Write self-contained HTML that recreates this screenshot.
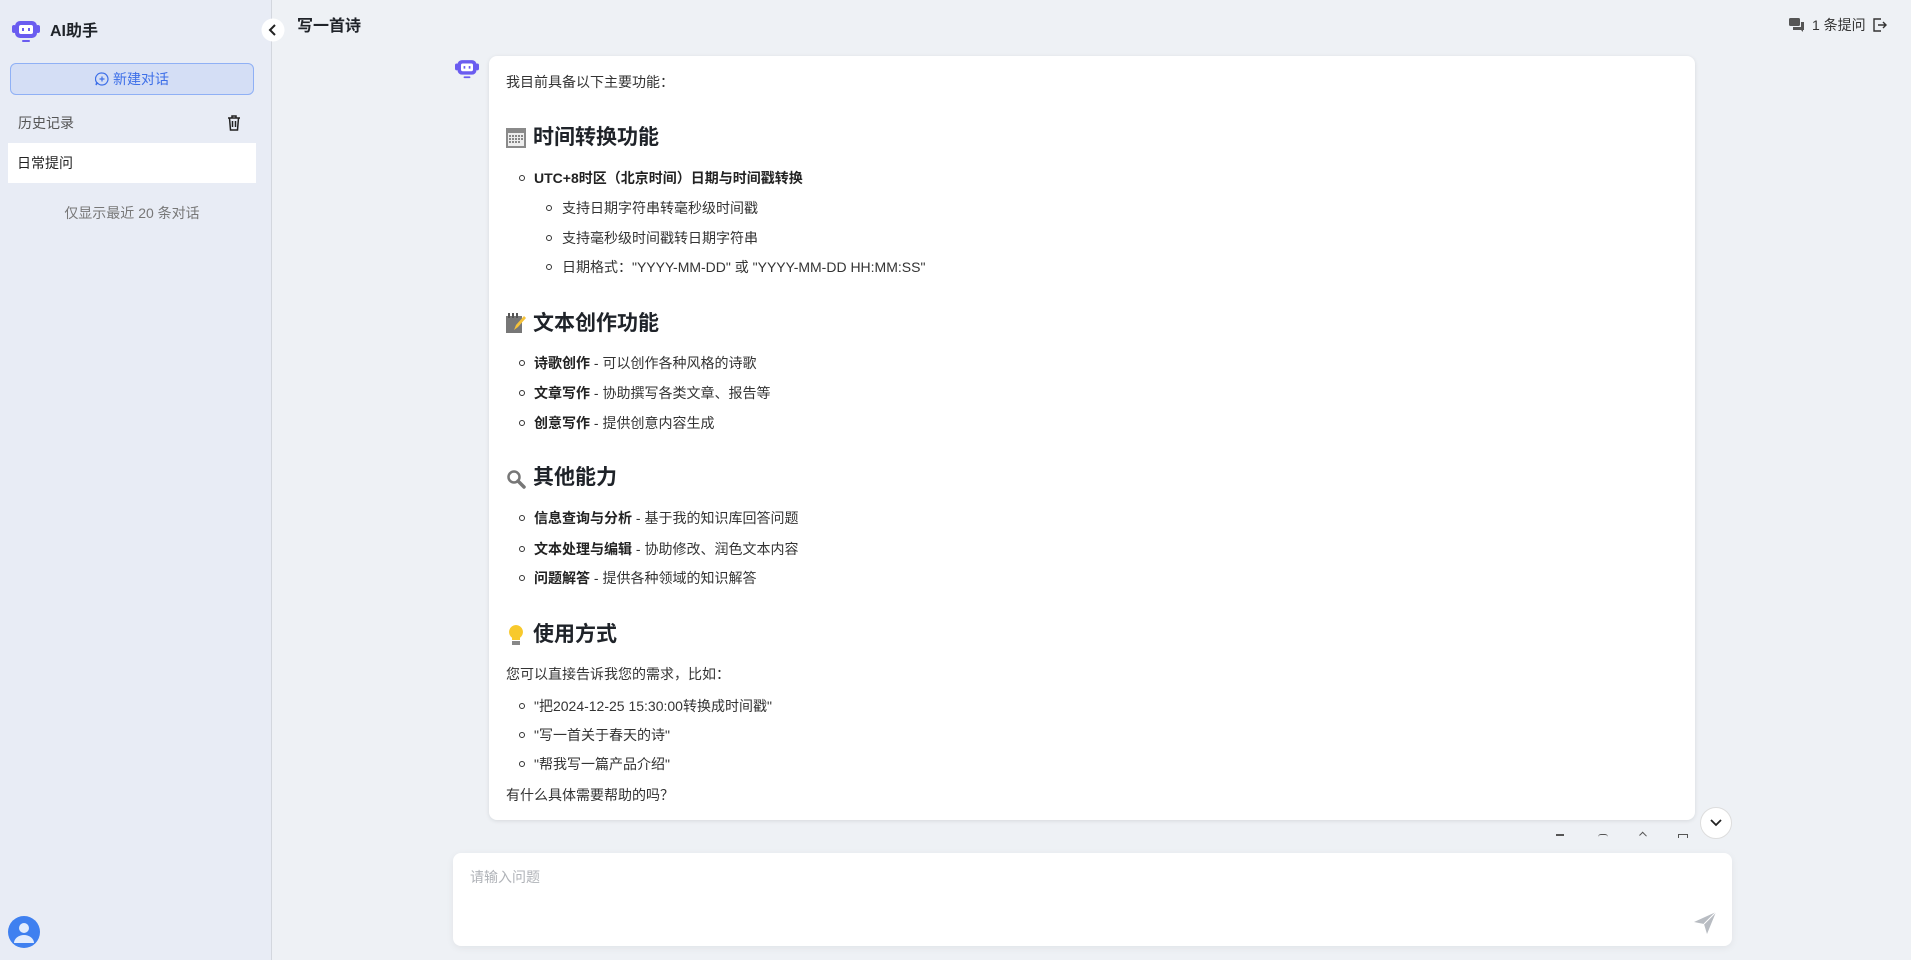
<!DOCTYPE html>
<html><head><meta charset="utf-8"><style>
*{margin:0;padding:0;box-sizing:border-box}
body{width:1911px;height:960px;overflow:hidden;background:#eef1f5;font-family:"Liberation Sans","Noto Sans CJK SC",sans-serif;color:#1f2329;position:relative}
.a{position:absolute;white-space:nowrap}
#side{position:absolute;left:0;top:0;width:272px;height:960px;background:#e8ecf5;border-right:1px solid #d3d7de}
.t{font-size:14px;line-height:20px;color:#333}
.h{font-size:21px;font-weight:bold;line-height:28px;color:#1f2329}
.b1{position:absolute;width:6px;height:6px;border:1.3px solid #333;border-radius:50%}
b{font-weight:bold;color:#222}
</style></head><body>
<div id="side">
 <svg class="a" style="left:12px;top:20px" width="28" height="24" viewBox="0 0 28 24"><rect x="0" y="5" width="4" height="8" rx="2" fill="#6a5cf0"/><rect x="24" y="5" width="4" height="8" rx="2" fill="#6a5cf0"/><rect x="3" y="1" width="22" height="17" rx="5" fill="#6a5cf0"/><rect x="7" y="5" width="14" height="9" rx="2" fill="#fff"/><rect x="10" y="8" width="2" height="3" fill="#6a5cf0"/><rect x="16" y="8" width="2" height="3" fill="#6a5cf0"/><rect x="10" y="20" width="8" height="2" rx="1" fill="#6a5cf0"/></svg>
 <div class="a" style="left:50px;top:20px;font-size:16px;font-weight:bold;line-height:24px">AI助手</div>
 <div class="a" style="left:10px;top:63px;width:244px;height:32px;border:1px solid #8fb0f5;border-radius:6px;background:#d4def5;color:#3d6fe8;font-size:14px;line-height:30px;text-align:center">
  <svg style="vertical-align:-2px;margin-right:4px" width="14" height="14" viewBox="0 0 14 14"><path d="M7 1a6 6 0 1 1-4.5 10L1 13l.6-2.6A6 6 0 0 1 7 1z" fill="none" stroke="#3d6fe8" stroke-width="1.2"/><path d="M7 4.5v5M4.5 7h5" stroke="#3d6fe8" stroke-width="1.2"/></svg>新建对话</div>
 <div class="a" style="left:18px;top:113px;font-size:14px;color:#555;line-height:20px">历史记录</div>
 <svg class="a" style="left:227px;top:115px" width="14" height="16" viewBox="0 0 14 16"><path d="M1 3h12M5 3V1h4v2M2.5 3l1 12h7l1-12M5.5 6v6M8.5 6v6" fill="none" stroke="#222" stroke-width="1.5"/></svg>
 <div class="a" style="left:8px;top:143px;width:248px;height:40px;background:#fff;font-size:14px;line-height:40px;padding-left:9px;color:#222">日常提问</div>
 <div class="a" style="left:0;top:203px;width:264px;text-align:center;font-size:14px;color:#777;line-height:20px">仅显示最近 20 条对话</div>
 <svg class="a" style="left:8px;top:916px" width="32" height="32" viewBox="0 0 32 32"><circle cx="16" cy="16" r="16" fill="#3f80f0"/><circle cx="16" cy="12" r="5" fill="#fff" opacity=".85"/><path d="M6 27a10 8 0 0 1 20 0z" fill="#fff" opacity=".85"/></svg>
</div>
<svg class="a" style="left:261px;top:18px" width="24" height="24" viewBox="0 0 24 24"><circle cx="12" cy="12" r="11.5" fill="#fff"/><path d="M14 7l-5 5 5 5" fill="none" stroke="#222" stroke-width="2"/></svg>
<div class="a" style="left:297px;top:15px;font-size:16px;font-weight:bold;line-height:24px">写一首诗</div>
<svg class="a" style="left:1789px;top:18px" width="16" height="14" viewBox="0 0 16 14"><rect x="0" y="0" width="11" height="8" rx="1.5" fill="#555"/><path d="M4 9v3h8l2 2v-2h1V4h-3v5z" fill="#555"/></svg>
<div class="a" style="left:1812px;top:15px;font-size:14px;line-height:20px;color:#333">1 条提问</div>
<svg class="a" style="left:1873px;top:18px" width="14" height="14" viewBox="0 0 14 14"><path d="M8 1H1v12h7M5 7h8M10 4l3 3-3 3" fill="none" stroke="#333" stroke-width="1.4"/></svg>

<svg class="a" style="left:455px;top:59px" width="24" height="21" viewBox="0 0 28 24"><rect x="0" y="5" width="4" height="8" rx="2" fill="#6a5cf0"/><rect x="24" y="5" width="4" height="8" rx="2" fill="#6a5cf0"/><rect x="3" y="1" width="22" height="17" rx="5" fill="#6a5cf0"/><rect x="7" y="5" width="14" height="9" rx="2" fill="#fff"/><rect x="10" y="8" width="2" height="3" fill="#6a5cf0"/><rect x="16" y="8" width="2" height="3" fill="#6a5cf0"/><rect x="10" y="20" width="8" height="2" rx="1" fill="#6a5cf0"/></svg>
<div class="a" style="left:489px;top:56px;width:1206px;height:764px;background:#fff;border-radius:8px;box-shadow:0 1px 4px rgba(0,0,0,.1)"></div>

<div class="a t" style="left:506px;top:72px">我目前具备以下主要功能：</div>

<svg class="a" style="left:506px;top:128px" width="20" height="20" viewBox="0 0 20 20"><rect x="0" y="0" width="20" height="20" fill="#8a8a8a"/><rect x="2" y="5" width="16" height="13" fill="#eee"/><g fill="#888"><rect x="3" y="7" width="2" height="2"/><rect x="6" y="7" width="2" height="2"/><rect x="9" y="7" width="2" height="2"/><rect x="12" y="7" width="2" height="2"/><rect x="15" y="7" width="2" height="2"/><rect x="3" y="10" width="2" height="2"/><rect x="6" y="10" width="2" height="2"/><rect x="9" y="10" width="2" height="2"/><rect x="12" y="10" width="2" height="2"/><rect x="15" y="10" width="2" height="2"/><rect x="3" y="13" width="2" height="2"/><rect x="6" y="13" width="2" height="2"/><rect x="9" y="13" width="2" height="2"/><rect x="12" y="13" width="2" height="2"/></g></svg>
<div class="a h" style="left:533px;top:124px">时间转换功能</div>
<div class="b1" style="left:519px;top:175px"></div><div class="a t" style="left:534px;top:168px"><b>UTC+8时区（北京时间）日期与时间戳转换</b></div>
<div class="b1" style="left:546px;top:205px"></div><div class="a t" style="left:562px;top:198px">支持日期字符串转毫秒级时间戳</div>
<div class="b1" style="left:546px;top:235px"></div><div class="a t" style="left:562px;top:228px">支持毫秒级时间戳转日期字符串</div>
<div class="b1" style="left:546px;top:264px"></div><div class="a t" style="left:562px;top:257px">日期格式："YYYY-MM-DD" 或 "YYYY-MM-DD HH:MM:SS"</div>

<svg class="a" style="left:506px;top:313px" width="20" height="20" viewBox="0 0 20 20"><rect x="0" y="3" width="16" height="17" fill="#777"/><rect x="2" y="0" width="2" height="5" fill="#555"/><rect x="6" y="0" width="2" height="5" fill="#555"/><rect x="10" y="0" width="2" height="5" fill="#555"/><path d="M8 17l2-5 8-9 2 2-8 9z" fill="#f5c23a"/></svg>
<div class="a h" style="left:533px;top:310px">文本创作功能</div>
<div class="b1" style="left:519px;top:360px"></div><div class="a t" style="left:534px;top:353px"><b>诗歌创作</b> - 可以创作各种风格的诗歌</div>
<div class="b1" style="left:519px;top:390px"></div><div class="a t" style="left:534px;top:383px"><b>文章写作</b> - 协助撰写各类文章、报告等</div>
<div class="b1" style="left:519px;top:420px"></div><div class="a t" style="left:534px;top:413px"><b>创意写作</b> - 提供创意内容生成</div>

<svg class="a" style="left:506px;top:469px" width="20" height="20" viewBox="0 0 20 20"><circle cx="8" cy="8" r="5.5" fill="none" stroke="#777" stroke-width="2.5"/><path d="M12 12l6 6" stroke="#777" stroke-width="3.5" stroke-linecap="round"/></svg>
<div class="a h" style="left:533px;top:464px">其他能力</div>
<div class="b1" style="left:519px;top:515px"></div><div class="a t" style="left:534px;top:508px"><b>信息查询与分析</b> - 基于我的知识库回答问题</div>
<div class="b1" style="left:519px;top:546px"></div><div class="a t" style="left:534px;top:539px"><b>文本处理与编辑</b> - 协助修改、润色文本内容</div>
<div class="b1" style="left:519px;top:575px"></div><div class="a t" style="left:534px;top:568px"><b>问题解答</b> - 提供各种领域的知识解答</div>

<svg class="a" style="left:508px;top:625px" width="16" height="22" viewBox="0 0 16 22"><path d="M8 0a7 7 0 0 1 4 12.7V15H4v-2.3A7 7 0 0 1 8 0z" fill="#f8c92c"/><rect x="4" y="16" width="8" height="4" fill="#888"/></svg>
<div class="a h" style="left:533px;top:621px">使用方式</div>
<div class="a t" style="left:506px;top:664px">您可以直接告诉我您的需求，比如：</div>
<div class="b1" style="left:519px;top:703px"></div><div class="a t" style="left:534px;top:696px">"把2024-12-25 15:30:00转换成时间戳"</div>
<div class="b1" style="left:519px;top:732px"></div><div class="a t" style="left:534px;top:725px">"写一首关于春天的诗"</div>
<div class="b1" style="left:519px;top:761px"></div><div class="a t" style="left:534px;top:754px">"帮我写一篇产品介绍"</div>
<div class="a t" style="left:506px;top:785px">有什么具体需要帮助的吗？</div>

<div class="a" style="left:1556px;top:834px;width:8px;height:2px;background:#555"></div>
<div class="a" style="left:1598px;top:834px;width:10px;height:3px;border-top:1.5px solid #555;border-radius:5px 5px 0 0"></div>
<div class="a" style="left:1640px;top:833px;width:6px;height:5px;border-top:1.5px solid #555;border-left:1.5px solid #555;transform:rotate(45deg)"></div>
<div class="a" style="left:1678px;top:834px;width:10px;height:4px;border:1.5px solid #555;border-bottom:none"></div>
<div class="a" style="left:1700px;top:807px;width:32px;height:32px;border-radius:50%;background:#fff;border:1px solid #ddd"></div>
<svg class="a" style="left:1709px;top:817px" width="14" height="12" viewBox="0 0 14 12"><path d="M2 3l5 5 5-5" fill="none" stroke="#222" stroke-width="1.8"/></svg>

<div class="a" style="left:453px;top:853px;width:1279px;height:93px;background:#fff;border-radius:8px;box-shadow:0 2px 8px rgba(0,0,0,.06)"></div>
<div class="a" style="left:470px;top:867px;font-size:14px;color:#b0b3b8;line-height:20px">请输入问题</div>
<svg class="a" style="left:1694px;top:912px" width="22" height="22" viewBox="0 0 22 22"><path d="M0 10L22 0 13 22 10 12z" fill="#b8bcc2"/><path d="M10 12L22 0" stroke="#fff" stroke-width="1"/></svg>
</body></html>
